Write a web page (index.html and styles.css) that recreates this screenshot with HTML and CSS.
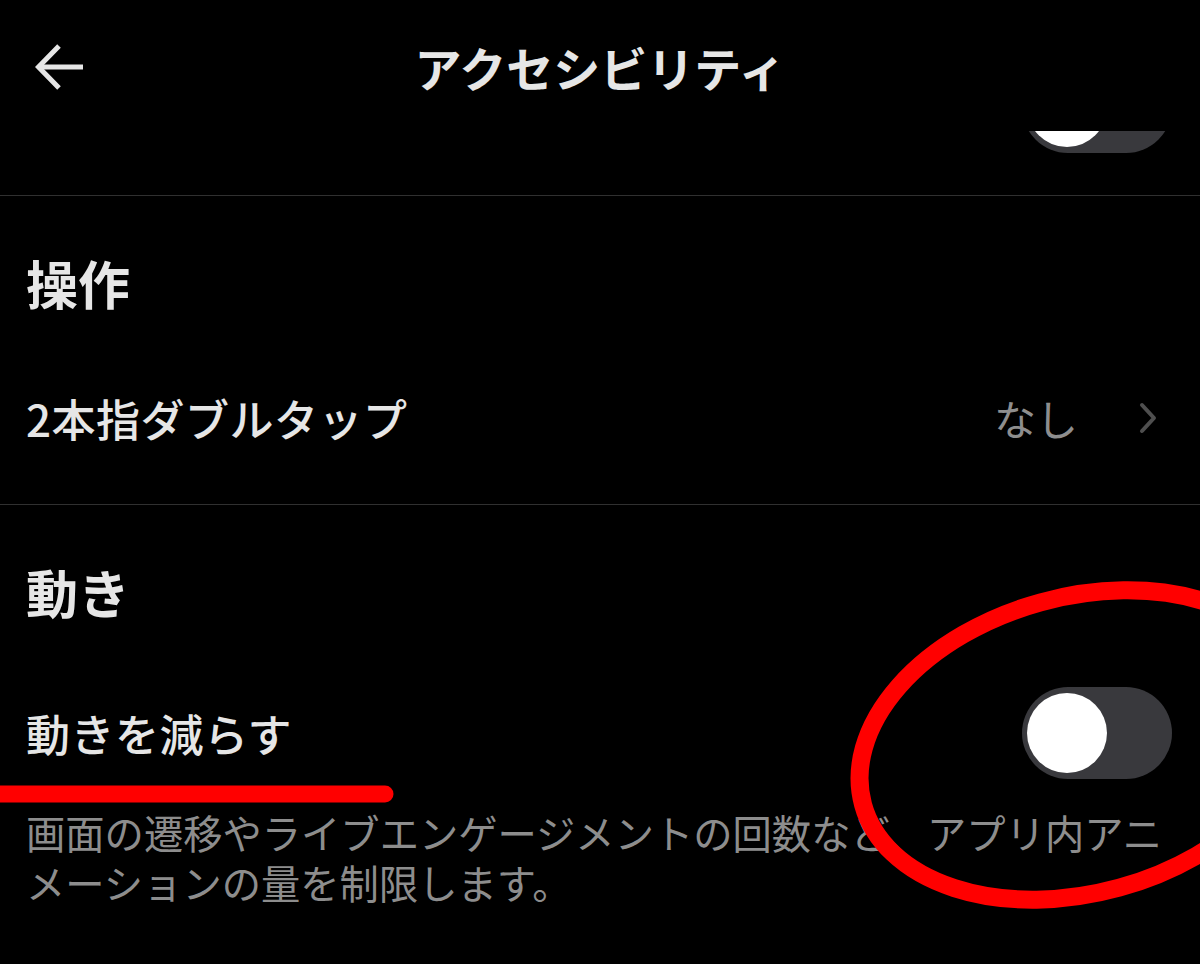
FILE: index.html
```html
<!DOCTYPE html>
<html lang="ja">
<head>
<meta charset="utf-8">
<title>アクセシビリティ</title>
<link rel="stylesheet" href="styles.css">
</head>
<body>
<div class="screen">
  <header class="topbar">
    <button class="back" aria-label="戻る">
      <svg width="50" height="46" viewBox="0 0 50 46" fill="none" stroke="#e6e6e6" stroke-width="5" stroke-linecap="butt" stroke-linejoin="miter">
        <path d="M4 23 H48"/>
        <path d="M24 2 L3.5 23 L24 44"/>
      </svg>
    </button>
    <h1 class="title">アクセシビリティ</h1>
    <span class="spacer"></span>
  </header>

  <div class="peek-row">
    <span class="toggle"><span class="knob"></span></span>
  </div>

  <section class="group">
    <h2 class="group-title">操作</h2>
    <div class="row row--nav">
      <span class="row-label">2本指ダブルタップ</span>
      <span class="row-value">なし</span>
      <svg class="chevron" width="24" height="36" viewBox="0 0 24 36" fill="none" stroke="#4f4f4f" stroke-width="4" stroke-linecap="round" stroke-linejoin="round">
        <path d="M6 5 L18 18 L6 31"/>
      </svg>
    </div>
  </section>

  <section class="group group--last">
    <h2 class="group-title">動き</h2>
    <div class="row row--switch">
      <span class="row-label">動きを減らす</span>
      <span class="toggle"><span class="knob"></span></span>
    </div>
    <p class="row-desc">画面の遷移やライブエンゲージメントの回数など、アプリ内アニメーションの量を制限します。</p>
  </section>
</div>

<svg class="annotations" width="1200" height="964" viewBox="0 0 1200 964" fill="none" stroke="#ff0000" stroke-linecap="round">
  <line x1="-20" y1="794" x2="385" y2="794" stroke-width="17"/>
  <ellipse cx="1080" cy="745" rx="225" ry="148" stroke-width="18" transform="rotate(-15.4 1080 745)"/>
</svg>
</body>
</html>
```

FILE: styles.css
```css
* {
  box-sizing: border-box;
}

html, body {
  margin: 0;
  padding: 0;
  background: #000;
}

body {
  width: 1200px;
  height: 964px;
  overflow: hidden;
  position: relative;
  font-family: "Noto Sans CJK JP", "Noto Sans", sans-serif;
  color: #e6e6e6;
}

.screen {
  display: flex;
  flex-direction: column;
}

.topbar {
  height: 131px;
  display: grid;
  grid-template-columns: 1fr auto 1fr;
  align-items: start;
  padding: 40px 35px 0 35px;
  background: #000;
}

.back {
  margin: 0;
  padding: 0;
  border: 0;
  background: transparent;
  width: 50px;
  height: 54px;
  display: flex;
  align-items: center;
}

.title {
  margin: 0;
  font-size: 47px;
  line-height: 54px;
  font-weight: 700;
  color: #e6e6e6;
  letter-spacing: 0;
}

.peek-row {
  height: 64px;
  overflow: hidden;
  display: flex;
  justify-content: flex-end;
  align-items: flex-end;
  padding: 0 28px 42px 0;
}

.toggle {
  flex: none;
  width: 150px;
  height: 92px;
  border-radius: 46px;
  background: #39393d;
  padding: 6px 5px;
  display: flex;
  align-items: center;
}

.knob {
  width: 80px;
  height: 80px;
  border-radius: 50%;
  background: #fff;
}

.group {
  border-top: 1px solid #303030;
  padding: 57px 0 40px;
  display: flex;
  flex-direction: column;
}

.group-title {
  margin: 0;
  padding-left: 26px;
  font-size: 52px;
  line-height: 60px;
  font-weight: 700;
  color: #e6e6e6;
}

.row {
  height: 92px;
  display: flex;
  align-items: center;
  padding: 0 28px 0 26px;
  margin-top: 59px;
}

.row--switch {
  margin-top: 65px;
}

.row-label {
  flex: 1;
  font-size: 44px;
  line-height: 56px;
  font-weight: 500;
  color: #e6e6e6;
  letter-spacing: 0.5px;
}

.row--nav {
  padding-right: 40px;
}

.row-value {
  font-size: 42px;
  line-height: 56px;
  font-weight: 400;
  color: #8e8e8e;
  margin-right: 58px;
}

.chevron {
  flex: none;
}

.row-desc {
  margin: 28px 0 0;
  padding: 0 30px 0 26px;
  font-size: 39.3px;
  line-height: 50px;
  font-weight: 400;
  color: #8d8d8d;
}

.annotations {
  position: absolute;
  top: 0;
  left: 0;
  pointer-events: none;
}
```
